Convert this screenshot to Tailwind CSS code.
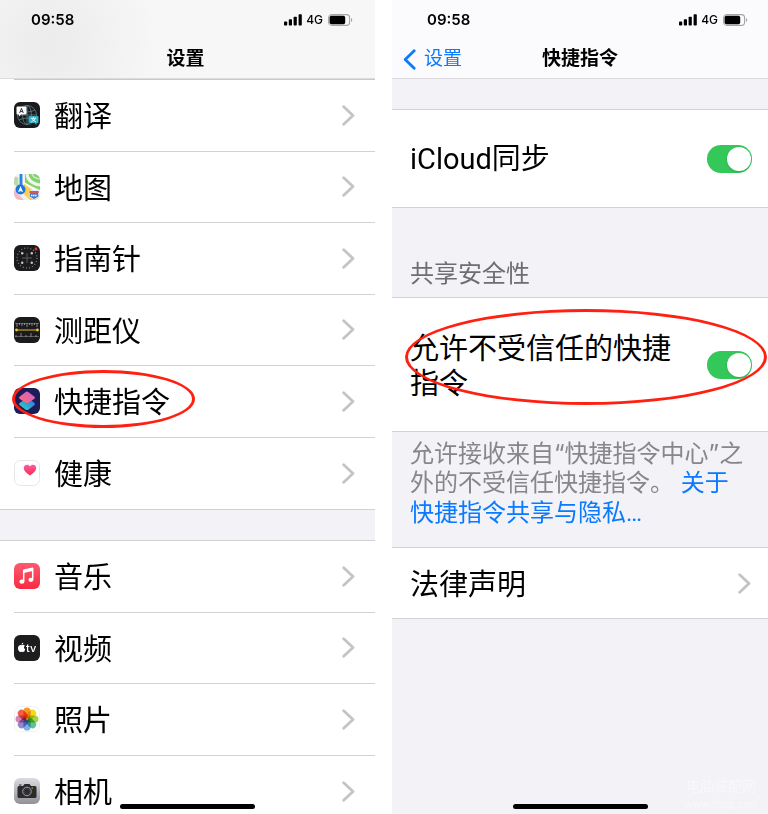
<!DOCTYPE html>
<html lang="zh-CN">
<head>
  <meta charset="UTF-8" />
  <meta name="viewport" content="width=device-width, initial-scale=1.0" />
  <title>设置 - 快捷指令</title>
  <script src="https://cdn.jsdelivr.net/npm/@tailwindcss/browser@4"></script>
</head>
<body class="bg-white text-black font-['Inter','Noto_Sans_CJK_SC',sans-serif]">
  <!-- shared symbols -->
  <svg class="hidden" aria-hidden="true">
    <symbol id="chevron" viewBox="0 0 13 21">
      <path d="M1.7 1.7 L11 10.5 L1.7 19.3" fill="none" stroke="#c4c4c6" stroke-width="2.8" stroke-linecap="round" stroke-linejoin="round" />
    </symbol>
    <symbol id="signal" viewBox="0 0 18 12">
      <rect x="0" y="7.5" width="3.2" height="4" rx="0.8" />
      <rect x="4.8" y="5.2" width="3.2" height="6.3" rx="0.8" />
      <rect x="9.6" y="2.8" width="3.2" height="8.7" rx="0.8" />
      <rect x="14.6" y="0.3" width="3.2" height="11.2" rx="0.8" />
    </symbol>
    <symbol id="battery" viewBox="0 0 25 12">
      <rect x="0.6" y="0.6" width="21" height="10.8" rx="3.2" fill="none" stroke="#a5a5a7" stroke-width="1.1" />
      <rect x="1.6" y="1.8" width="15.6" height="8.4" rx="1.8" />
      <path d="M23 4 a2.2 2.2 0 0 1 0 4z" fill="#a5a5a7" />
    </symbol>
  </svg>

  <div class="flex h-screen gap-[17px] overflow-hidden">
    <!-- Settings list -->
    <section class="relative min-w-0 flex-[375] overflow-hidden">
      <header class="h-[79px] border-b border-[#dcdcde] bg-[#f7f7f7] bg-[radial-gradient(circle_at_50px_45px,#ebebeb,#f7f7f7_110px)]">
        <div class="flex h-10 items-center justify-between pl-[31px] pr-[22px]">
          <time class="text-[15px] font-semibold">09:58</time>
          <div class="flex items-center gap-1">
            <svg class="h-3 w-[18px]"><use href="#signal" /></svg>
            <span class="text-xs font-medium">4G</span>
            <svg class="ml-px h-3 w-[25px]"><use href="#battery" /></svg>
          </div>
        </div>
        <h1 class="pr-1 text-center text-[19px] leading-[38px] font-semibold">设置</h1>
      </header>

      <ul class="ml-3.5 grid h-[430px] grid-rows-6 border-t border-[#c9c9cb] text-[29px]">
        <li class="border-b border-[#d2d2d4]">
          <a href="#" class="flex h-full items-center gap-3.5 pr-5">
            <svg class="size-[26px]" viewBox="0 0 26 26">
              <rect width="26" height="26" rx="6" fill="#1a1a1c" />
              <g fill="none" stroke="#5d7f86" stroke-width="0.8">
                <circle cx="13" cy="13" r="9.5" /><ellipse cx="13" cy="13" rx="4.5" ry="9.5" /><path d="M3.5 13h19M13 3.5v19M5 8q8 4 16 0M5 18q8-4 16 0" />
              </g>
              <path d="M3.5 4.5h8q1 0 1 1v6q0 1-1 1H7l-2 2v-2H3.5q-1 0-1-1v-6q0-1 1-1z" fill="#fff" />
              <path d="M15.5 14h8q1 0 1 1v5q0 1-1 1h-1v2l-2-2h-5q-1 0-1-1v-5q0-1 1-1z" fill="#36b0c4" />
              <path d="M5.700 11 L7.500 6.300 L9.300 11 M6.400 9.500h2.200" stroke="#222" stroke-width="0.9" fill="none" />
              <path d="M16.800 16.300h5.400M19.500 15.200v1.100M17.300 19.800q3-1.200 4-3.500M21.800 19.800q-3-1.200-4-3.500" stroke="#fff" stroke-width="0.8" fill="none" />
            </svg>
            <span class="flex-1 pt-[3px]">翻译</span>
            <svg class="h-[21px] w-[13px]"><use href="#chevron" /></svg>
          </a>
        </li>
        <li class="border-b border-[#d2d2d4]">
          <a href="#" class="flex h-full items-center gap-3.5 pr-5">
            <svg class="size-[26px]" viewBox="0 0 26 26">
              <clipPath id="mapClip"><rect width="26" height="26" rx="6" /></clipPath>
              <g clip-path="url(#mapClip)">
                <rect width="26" height="26" fill="#f1efe9" />
                <path d="M11 0h15v16L11 9z" fill="#7fd46b" />
                <path d="M13 0q1 9 13 11" fill="none" stroke="#f0f4ea" stroke-width="3" />
                <path d="M18 0q1 4 8 5" fill="none" stroke="#c9ecc0" stroke-width="1.5" />
                <path d="M0 2 L0 10 L5 14V4z" fill="#b9dba9" />
                <path d="M0 16l10 10H0z" fill="#f5b8c3" />
                <path d="M9 9 L26 22v4H16L8 18z" fill="#fad04b" />
                <path d="M9 8 L26 19" stroke="#fff" stroke-width="1.2" />
                <path d="M7 0v12" stroke="#fff" stroke-width="5" /><path d="M7 0v12" stroke="#2b83ea" stroke-width="3" />
                <circle cx="6.5" cy="15.500" r="5" fill="#1976e4" />
                <path d="M6.500 12l2.600 6.300-2.600-1.300-2.600 1.300z" fill="#fff" />
                <path d="M15 17.500q2 0 2-1h6q0 1 2 1-1 3 0 5l-5 3-5-3q1-2 0-5z" fill="#417fd6" stroke="#fff" stroke-width="0.7" />
                <path d="M15.500 18h9.200" stroke="#df5350" stroke-width="1.8" /><path d="M17 21.500h6" stroke="#fff" stroke-width="1.5" stroke-dasharray="1.5 0.5" />
              </g>
            </svg>
            <span class="flex-1 pt-[3px]">地图</span>
            <svg class="h-[21px] w-[13px]"><use href="#chevron" /></svg>
          </a>
        </li>
        <li class="border-b border-[#d2d2d4]">
          <a href="#" class="flex h-full items-center gap-3.5 pr-5">
            <svg class="size-[26px]" viewBox="0 0 26 26">
              <rect width="26" height="26" rx="6" fill="#1b1b1d" />
              <circle cx="13" cy="13" r="10" fill="none" stroke="#858588" stroke-width="1.2" stroke-dasharray="1 2.14" />
              <path d="M13 8v10M8 13h10" stroke="#5c5c5f" stroke-width="1" />
              <g fill="#c9c9cb"><circle cx="8.200" cy="8.200" r="1.200" /><circle cx="17.800" cy="8.200" r="1.200" /><circle cx="8.200" cy="17.800" r="1.200" /><circle cx="17.800" cy="17.800" r="1.200" /></g>
              <circle cx="22" cy="4" r="1.400" fill="#f0322c" />
            </svg>
            <span class="flex-1 pt-[3px]">指南针</span>
            <svg class="h-[21px] w-[13px]"><use href="#chevron" /></svg>
          </a>
        </li>
        <li class="border-b border-[#d2d2d4]">
          <a href="#" class="flex h-full items-center gap-3.5 pr-5">
            <svg class="size-[26px]" viewBox="0 0 26 26">
              <rect width="26" height="26" rx="6" fill="#1b1b1d" />
              <path d="M1 6.500h24M1 19.500h24" stroke="#77777a" stroke-width="0.7" />
              <path d="M3 6v4M8 6v3M13 6v4M18 6v3M23 6v4M5.500 6v2M10.500 6v2M15.500 6v2M20.500 6v2M2 20v-2M7 20v-4M12 20v-2M17 20v-4M22 20v-2" stroke="#a0a0a3" stroke-width="0.8" />
              <path d="M3 13h20" stroke="#e6bb22" stroke-width="1" />
              <circle cx="2.500" cy="13" r="1.400" fill="#f4c624" /><circle cx="23.500" cy="13" r="1.400" fill="#f4c624" />
            </svg>
            <span class="flex-1 pt-[3px]">测距仪</span>
            <svg class="h-[21px] w-[13px]"><use href="#chevron" /></svg>
          </a>
        </li>
        <li class="relative border-b border-[#d2d2d4]">
          <a href="#" class="flex h-full items-center gap-3.5 pr-5">
            <svg class="size-[26px]" viewBox="0 0 26 26">
              <defs>
                <linearGradient id="scTop" x1="0" y1="1" x2="1" y2="0"><stop offset="0" stop-color="#fa6f72" /><stop offset="0.5" stop-color="#e8659f" /><stop offset="1" stop-color="#c460dc" /></linearGradient>
                <linearGradient id="scBottom" x1="0" y1="1" x2="1" y2="0"><stop offset="0" stop-color="#35dfb0" /><stop offset="0.55" stop-color="#2f9fd8" /><stop offset="1" stop-color="#3b66e8" /></linearGradient>
              </defs>
              <rect width="26" height="26" rx="6" fill="#1d1b58" />
              <path d="M5.500 15l5-3.500h6l4 3.500q1 1 0 2l-6.200 4.700q-1.300.8-2.600 0L5.500 17q-1-1 0-2z" fill="url(#scBottom)" />
              <path d="M5.500 8.700L11.700 4q1.300-.8 2.600 0l6.200 4.700q1 1 0 2l-6.200 4q-1.300.8-2.600 0l-6.200-4q-1-1 0-2z" fill="url(#scTop)" />
            </svg>
            <span class="flex-1 pt-[3px]">快捷指令</span>
            <svg class="h-[21px] w-[13px]"><use href="#chevron" /></svg>
          </a>
          <!-- red marker -->
          <div class="pointer-events-none absolute top-1 -left-0.5 h-[58px] w-[183px] rounded-[50%] border-3 border-[#ff2012]"></div>
        </li>
        <li>
          <a href="#" class="flex h-full items-center gap-3.5 pr-5">
            <svg class="size-[26px]" viewBox="0 0 26 26">
              <defs><linearGradient id="heart" x1="0" y1="0" x2="0" y2="1"><stop offset="0" stop-color="#fb5cae" /><stop offset="1" stop-color="#fc2b42" /></linearGradient></defs>
              <rect x="0.5" y="0.5" width="25" height="25" rx="6" fill="#fff" stroke="#e6e6e8" />
              <path d="M16 15.500C12 12.500 9.800 10.700 9.800 8c0-3.600 4.500-4.500 6.200-1.700C17.700 3.500 22.200 4.400 22.200 8c0 2.700-2.200 4.500-6.200 7.500z" fill="url(#heart)" />
            </svg>
            <span class="flex-1 pt-[3px]">健康</span>
            <svg class="h-[21px] w-[13px]"><use href="#chevron" /></svg>
          </a>
        </li>
      </ul>

      <div class="h-8 border-y border-[#d2d2d4] bg-[#f2f2f7]"></div>

      <ul class="ml-3.5 grid h-[286px] grid-rows-4 text-[29px]">
        <li class="border-b border-[#d2d2d4]">
          <a href="#" class="flex h-full items-center gap-3.5 pr-5">
            <svg class="size-[26px]" viewBox="0 0 26 26">
              <defs><linearGradient id="music" x1="0" y1="0" x2="0" y2="1"><stop offset="0" stop-color="#fb5b70" /><stop offset="1" stop-color="#fa2a42" /></linearGradient></defs>
              <rect width="26" height="26" rx="6" fill="url(#music)" />
              <path d="M9.700 18.500V7.300l9-2v11.200" fill="none" stroke="#fff" stroke-width="1.5" stroke-linejoin="round" />
              <path d="M9.700 7l9-2v3l-9 2z" fill="#fff" />
              <ellipse cx="7.900" cy="18.700" rx="2.500" ry="2.100" fill="#fff" /><ellipse cx="16.900" cy="16.800" rx="2.500" ry="2.100" fill="#fff" />
            </svg>
            <span class="flex-1 pt-[3px]">音乐</span>
            <svg class="h-[21px] w-[13px]"><use href="#chevron" /></svg>
          </a>
        </li>
        <li class="border-b border-[#d2d2d4]">
          <a href="#" class="flex h-full items-center gap-3.5 pr-5">
            <svg class="size-[26px]" viewBox="0 0 26 26">
              <rect width="26" height="26" rx="6" fill="#1d1d1f" />
              <path d="M7.600 10.200q2-1 3.300.6-2 1.500.3 3.700-.9 2.700-2.300 2.500-1.200-.5-2.300 0C4.900 17.300 3.800 14.500 4 12.600q.6-3.200 3.600-2.400zM7.500 9.700q0-1.900 1.800-2.300.1 2-1.800 2.300z" fill="#fff" />
              <text x="12" y="17" font-size="11" font-weight="500" fill="#fff">tv</text>
            </svg>
            <span class="flex-1 pt-[3px]">视频</span>
            <svg class="h-[21px] w-[13px]"><use href="#chevron" /></svg>
          </a>
        </li>
        <li class="border-b border-[#d2d2d4]">
          <a href="#" class="flex h-full items-center gap-3.5 pr-5">
            <svg class="size-[26px]" viewBox="0 0 26 26">
              <rect x="0.5" y="0.5" width="25" height="25" rx="6" fill="#fff" stroke="#f1f1f3" />
              <rect x="9.400" y="1.500" width="7.200" height="11" rx="3.600" fill="#f79a20" class="mix-blend-multiply" />
              <rect x="9.400" y="1.500" width="7.200" height="11" rx="3.600" fill="#f2dc18" class="mix-blend-multiply" transform="rotate(45 13 13)" />
              <rect x="9.400" y="1.500" width="7.200" height="11" rx="3.600" fill="#a8d047" class="mix-blend-multiply" transform="rotate(90 13 13)" />
              <rect x="9.400" y="1.500" width="7.200" height="11" rx="3.600" fill="#5fc39a" class="mix-blend-multiply" transform="rotate(135 13 13)" />
              <rect x="9.400" y="1.500" width="7.200" height="11" rx="3.600" fill="#78b2e4" class="mix-blend-multiply" transform="rotate(180 13 13)" />
              <rect x="9.400" y="1.500" width="7.200" height="11" rx="3.600" fill="#9887c8" class="mix-blend-multiply" transform="rotate(225 13 13)" />
              <rect x="9.400" y="1.500" width="7.200" height="11" rx="3.600" fill="#d485b5" class="mix-blend-multiply" transform="rotate(270 13 13)" />
              <rect x="9.400" y="1.500" width="7.200" height="11" rx="3.600" fill="#f2604d" class="mix-blend-multiply" transform="rotate(315 13 13)" />
            </svg>
            <span class="flex-1 pt-[3px]">照片</span>
            <svg class="h-[21px] w-[13px]"><use href="#chevron" /></svg>
          </a>
        </li>
        <li>
          <a href="#" class="flex h-full items-center gap-3.5 pr-5">
            <svg class="size-[26px]" viewBox="0 0 26 26">
              <defs><linearGradient id="cam" x1="0" y1="0" x2="0" y2="1"><stop offset="0" stop-color="#dcdbe1" /><stop offset="1" stop-color="#929197" /></linearGradient></defs>
              <rect width="26" height="26" rx="6" fill="url(#cam)" />
              <path d="M5 8h4l1.500-2h5L17 8h4q1.500 0 1.500 1.500v9Q22.500 20 21 20H5q-1.500 0-1.500-1.500v-9Q3.500 8 5 8zM5 6.500h2.500v1H5z" fill="#2b2b2d" />
              <circle cx="13" cy="13.500" r="4.300" fill="#2b2b2d" stroke="#aaaaae" stroke-width="0.9" /><circle cx="13" cy="13.500" r="2.800" fill="none" stroke="#4a4a4d" stroke-width="0.6" />
              <circle cx="18.200" cy="10" r="0.700" fill="#eebc30" />
            </svg>
            <span class="flex-1 pt-[3px]">相机</span>
            <svg class="h-[21px] w-[13px]"><use href="#chevron" /></svg>
          </a>
        </li>
      </ul>
      <div class="absolute inset-x-0 bottom-[5px] mx-auto h-[5px] w-[135px] rounded-full bg-black"></div>
    </section>

    <!-- Shortcuts settings -->
    <section class="relative min-w-0 flex-[376] overflow-hidden bg-[#f2f2f7]">
      <header class="h-[79px] border-b border-[#d9d9dd] bg-[#fbfbfd]">
        <div class="flex h-10 items-center justify-between pl-[35px] pr-5">
          <time class="text-[15px] font-semibold">09:58</time>
          <div class="flex items-center gap-1">
            <svg class="h-3 w-[18px]"><use href="#signal" /></svg>
            <span class="text-xs font-medium">4G</span>
            <svg class="ml-px h-3 w-[25px]"><use href="#battery" /></svg>
          </div>
        </div>
        <nav class="grid grid-cols-3 items-center text-[19px] leading-[38px]">
          <a href="#" class="flex items-center gap-2 pl-[11px] text-[#0a7aff]">
            <svg class="h-[21px] w-[13px]" viewBox="0 0 13 21"><path d="M11.200 1.700L2.200 10.500l9 8.800" fill="none" stroke="currentColor" stroke-width="2.8" stroke-linecap="round" stroke-linejoin="round" /></svg>
            设置
          </a>
          <h2 class="text-center font-semibold">快捷指令</h2>
        </nav>
      </header>

      <div class="mt-[30px] flex h-[99px] items-center justify-between border-y border-[#d2d2d6] bg-white pl-[18px] pr-4">
        <label for="icloud" class="pt-[3px] font-[Roboto,'Noto_Sans_CJK_SC',sans-serif] text-[29px]">iCloud同步</label>
        <input id="icloud" type="checkbox" role="switch" checked class="h-7 w-[45px] appearance-none rounded-full bg-[#d8d8dc] p-[2px] before:block before:size-6 before:rounded-full before:bg-white before:shadow checked:bg-[#34c759] checked:before:ml-[18px]" />
      </div>

      <h3 class="flex h-[89px] items-end px-[18px] pb-[5px] text-2xl leading-9 text-[#6d6d72]">共享安全性</h3>

      <div class="relative flex h-[135px] items-center justify-between border-y border-[#d2d2d6] bg-white pl-[18px] pr-4">
        <label for="untrusted" class="w-[270px] pt-[3px] text-[29px] leading-[35px]">允许不受信任的快捷指令</label>
        <input id="untrusted" type="checkbox" role="switch" checked class="h-7 w-[45px] appearance-none rounded-full bg-[#d8d8dc] p-[2px] before:block before:size-6 before:rounded-full before:bg-white before:shadow checked:bg-[#34c759] checked:before:ml-[18px]" />
        <!-- red marker -->
        <div class="pointer-events-none absolute top-[11px] right-px left-[13px] h-24 rounded-[50%] border-3 border-[#ff2012]"></div>
      </div>

      <p class="h-[115px] px-[18px] pt-[7px] text-2xl leading-[29px] text-[#86868b]">允许接收来自“快捷指令中心”之外的不受信任快捷指令。 <a href="#" class="font-[Roboto,'Noto_Sans_CJK_SC',sans-serif] text-[#0a7aff]">关于快捷指令共享与隐私…</a></p>

      <a href="#" class="flex h-[72px] items-center justify-between border-y border-[#d2d2d6] bg-white pr-[17px] pl-[18px] text-[29px]">
        <span class="pt-[3px]">法律声明</span>
        <svg class="h-[21px] w-[13px]"><use href="#chevron" /></svg>
      </a>

      <div class="absolute right-2.5 bottom-0.5 text-center text-white/50">
        <p class="text-sm leading-5">电脑装配网</p>
        <p class="text-[10px] leading-4">www.dnzp.com</p>
      </div>
      <div class="absolute inset-x-0 bottom-[5px] mx-auto h-[5px] w-[135px] rounded-full bg-black"></div>
    </section>
  </div>
</body>
</html>
